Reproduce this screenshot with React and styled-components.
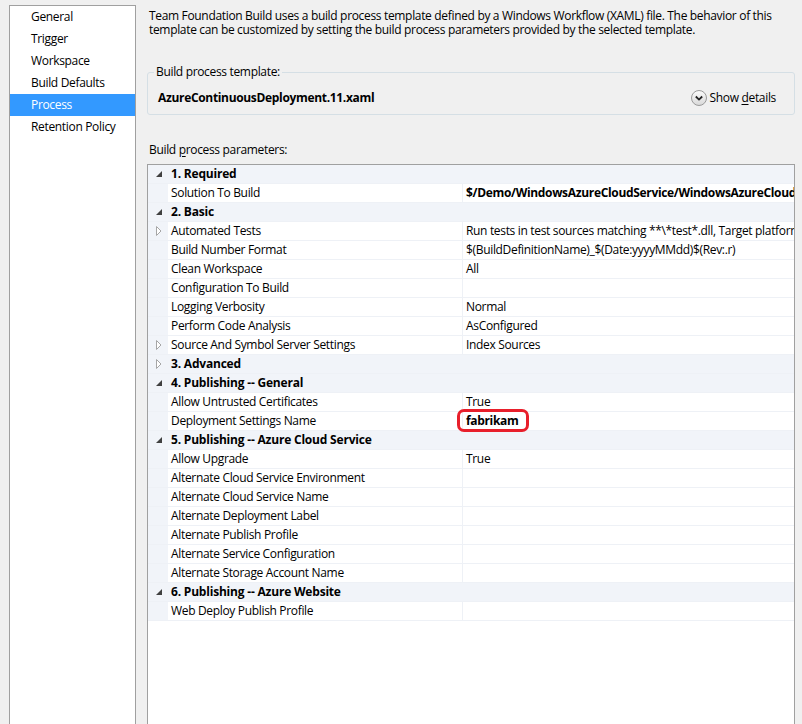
import React from "react";
import styled, { createGlobalStyle } from "styled-components";

const GlobalStyle = createGlobalStyle`
  html, body { margin: 0; padding: 0; }
  body {
    background: #f0f0f0;
    font-family: "Open Sans", "Noto Sans", sans-serif;
    font-size: 12px;
    letter-spacing: -0.33px;
    color: #000;
  }
`;

const Page = styled.div`
  display: flex;
  height: 724px;
  overflow: hidden;
`;

const Nav = styled.nav`
  margin: 5px 0 0 9px;
  width: 125px;
  flex: none;
  height: 740px;
  background: #fff;
  border: 1px solid #a0a0a0;
  display: flex;
  flex-direction: column;
`;

const NavItem = styled.div`
  height: 22px;
  line-height: 22px;
  padding-left: 21px;
  background: ${(p) => (p.$active ? "#3399ff" : "transparent")};
  color: ${(p) => (p.$active ? "#fff" : "#000")};
  white-space: nowrap;
`;

const Main = styled.main`
  flex: 1;
  min-width: 0;
  display: flex;
  flex-direction: column;
  padding: 9px 7px 0 11px;
`;

const Description = styled.p`
  margin: 0 0 0 2px;
  line-height: 14px;
  white-space: nowrap;
`;

const GroupBox = styled.fieldset`
  margin: 28px 0 0 0;
  padding: 10px 10px 0 10px;
  height: 38px;
  border: 1px solid #d5dfe5;
  border-radius: 3px;
  display: flex;
  align-items: center;
  justify-content: space-between;
`;

const Legend = styled.legend`
  padding: 0 2px;
  margin-left: -4px;
  line-height: 14px;
`;

const TemplateName = styled.span`
  font-weight: 700;
`;

const DetailsButton = styled.button`
  display: flex;
  align-items: center;
  gap: 3px;
  border: none;
  background: none;
  padding: 0;
  margin-right: 8px;
  font: inherit;
  letter-spacing: inherit;
  color: #000;
  cursor: pointer;
`;

const Underlined = styled.u`
  text-decoration: underline;
  text-underline-offset: 2px;
`;

const SectionLabel = styled.div`
  margin: 28px 0 0 2px;
  line-height: 14px;
`;

const Grid = styled.div`
  margin-top: 7px;
  flex: 1;
  margin-bottom: -4px;
  border: 1px solid #a0a0a0;
  background: #fff;
  overflow: hidden;
`;

const Row = styled.div`
  display: grid;
  grid-template-columns: 20px 294px minmax(0, 1fr);
  height: 18px;
  border-bottom: 1px solid #eef1f6;
  background: ${(p) => (p.$header ? "#f1f4f9" : "#fff")};
`;

const Gutter = styled.div`
  background: #f1f4f9;
  display: flex;
  align-items: center;
  justify-content: center;
  padding-left: 1px;
`;

const NameCell = styled.div`
  padding-left: 3px;
  line-height: 18px;
  white-space: nowrap;
  font-weight: ${(p) => (p.$bold ? 700 : 400)};
  letter-spacing: ${(p) => (p.$bold ? "-0.2px" : "inherit")};
  grid-column: ${(p) => (p.$span ? "2 / 4" : "auto")};
`;

const ValueCell = styled.div`
  position: relative;
  min-width: 0;
  border-left: 1px solid #eef1f6;
  padding-left: 3px;
  line-height: 18px;
  white-space: nowrap;
  font-weight: ${(p) => (p.$bold ? 700 : 400)};
`;

const Highlight = styled.span`
  position: absolute;
  left: -6px;
  top: -3px;
  box-sizing: border-box;
  width: 72px;
  height: 23px;
  border: 3px solid #e81f2b;
  border-radius: 7px;
  pointer-events: none;
`;

const Expanded = () => (
  <svg width="6" height="6" viewBox="0 0 6 6">
    <polygon points="6,0 6,6 0,6" fill="#404040" />
  </svg>
);

const Collapsed = () => (
  <svg width="6" height="10" viewBox="0 0 6 10">
    <polygon points="0.5,0.5 5,5 0.5,9.5" fill="#fff" stroke="#a6a6a6" strokeWidth="1" />
  </svg>
);

const ChevronCircle = () => (
  <svg width="16" height="16" viewBox="0 0 16 16">
    <defs>
      <linearGradient id="cg" x1="0" y1="0" x2="0" y2="1">
        <stop offset="0" stopColor="#fbfbfb" />
        <stop offset="1" stopColor="#d8d8d8" />
      </linearGradient>
    </defs>
    <circle cx="8" cy="8" r="7.5" fill="url(#cg)" stroke="#9a9a9a" />
    <path d="M4.8 6.5 L8 9.6 L11.2 6.5" fill="none" stroke="#222" strokeWidth="1.8" />
  </svg>
);

const sections = [
  {
    title: "1. Required",
    open: true,
    items: [
      { name: "Solution To Build", value: "$/Demo/WindowsAzureCloudService/WindowsAzureCloudService.sln", bold: true },
    ],
  },
  {
    title: "2. Basic",
    open: true,
    items: [
      { name: "Automated Tests", value: "Run tests in test sources matching **\\*test*.dll, Target platform: 'X86'", expander: true },
      { name: "Build Number Format", value: "$(BuildDefinitionName)_$(Date:yyyyMMdd)$(Rev:.r)" },
      { name: "Clean Workspace", value: "All" },
      { name: "Configuration To Build", value: "" },
      { name: "Logging Verbosity", value: "Normal" },
      { name: "Perform Code Analysis", value: "AsConfigured" },
      { name: "Source And Symbol Server Settings", value: "Index Sources", expander: true },
    ],
  },
  { title: "3. Advanced", open: false, items: [] },
  {
    title: "4. Publishing -- General",
    open: true,
    items: [
      { name: "Allow Untrusted Certificates", value: "True" },
      { name: "Deployment Settings Name", value: "fabrikam", bold: true, highlight: true },
    ],
  },
  {
    title: "5. Publishing -- Azure Cloud Service",
    open: true,
    items: [
      { name: "Allow Upgrade", value: "True" },
      { name: "Alternate Cloud Service Environment", value: "" },
      { name: "Alternate Cloud Service Name", value: "" },
      { name: "Alternate Deployment Label", value: "" },
      { name: "Alternate Publish Profile", value: "" },
      { name: "Alternate Service Configuration", value: "" },
      { name: "Alternate Storage Account Name", value: "" },
    ],
  },
  {
    title: "6. Publishing -- Azure Website",
    open: true,
    items: [{ name: "Web Deploy Publish Profile", value: "" }],
  },
];

const navItems = ["General", "Trigger", "Workspace", "Build Defaults", "Process", "Retention Policy"];

export default function App() {
  return (
    <>
      <GlobalStyle />
      <Page>
        <Nav>
          {navItems.map((n) => (
            <NavItem key={n} $active={n === "Process"}>
              {n}
            </NavItem>
          ))}
        </Nav>
        <Main>
          <Description>
            Team Foundation Build uses a build process template defined by a Windows Workflow (XAML) file. The behavior of this
            <br />
            template can be customized by setting the build process parameters provided by the selected template.
          </Description>
          <GroupBox>
            <Legend>Build process template:</Legend>
            <TemplateName>AzureContinuousDeployment.11.xaml</TemplateName>
            <DetailsButton>
              <ChevronCircle />
              <span>
                Show <Underlined>d</Underlined>etails
              </span>
            </DetailsButton>
          </GroupBox>
          <SectionLabel>
            Build <Underlined>p</Underlined>rocess parameters:
          </SectionLabel>
          <Grid>
            {sections.map((s) => (
              <React.Fragment key={s.title}>
                <Row $header>
                  <Gutter>{s.open ? <Expanded /> : <Collapsed />}</Gutter>
                  <NameCell $bold $span>
                    {s.title}
                  </NameCell>
                </Row>
                {s.items.map((it) => (
                  <Row key={it.name}>
                    <Gutter>{it.expander ? <Collapsed /> : null}</Gutter>
                    <NameCell>{it.name}</NameCell>
                    <ValueCell $bold={it.bold}>
                      {it.value}
                      {it.highlight ? <Highlight /> : null}
                    </ValueCell>
                  </Row>
                ))}
              </React.Fragment>
            ))}
          </Grid>
        </Main>
      </Page>
    </>
  );
}
